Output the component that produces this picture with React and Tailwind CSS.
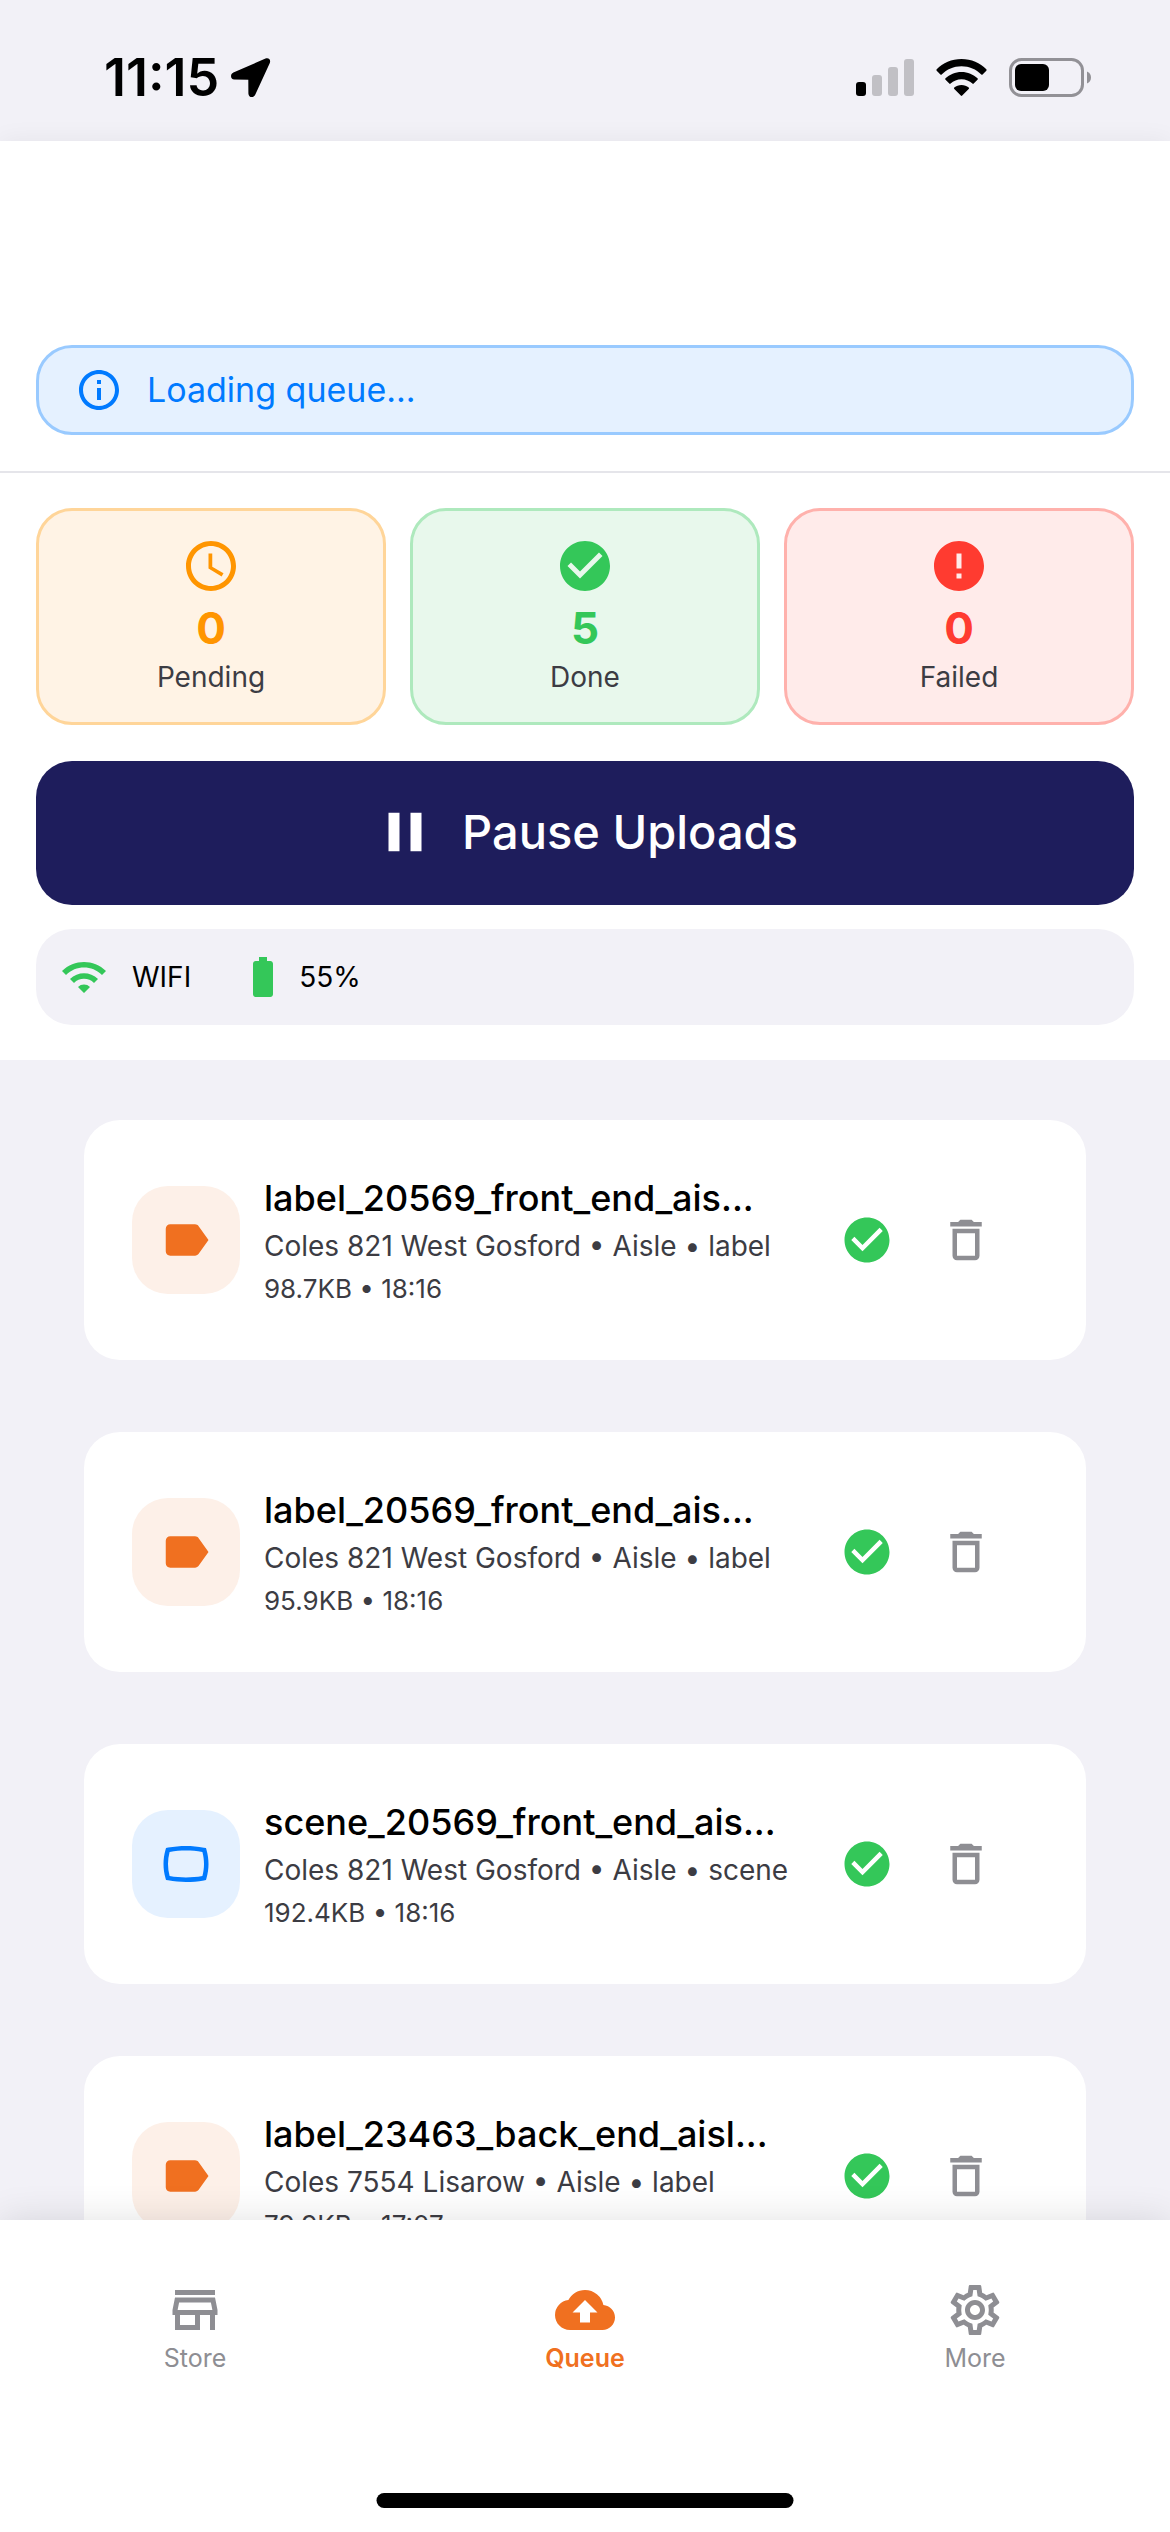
import {
  MdInfoOutline,
  MdAccessTime,
  MdCheckCircle,
  MdError,
  MdPause,
  MdWifi,
  MdBatteryFull,
  MdLabel,
  MdOutlinePanoramaWideAngle,
  MdDeleteOutline,
  MdOutlineStore,
  MdBackup,
  MdOutlineSettings,
} from 'react-icons/md';

const STATS = [
  { label: 'Pending', value: 0, icon: MdAccessTime, color: 'text-[#ff9500]', box: 'bg-[#fff3e5] border-[#ffd599]' },
  { label: 'Done', value: 5, icon: MdCheckCircle, color: 'text-[#34c759]', box: 'bg-[#e8f8ec] border-[#aee9bd]' },
  { label: 'Failed', value: 0, icon: MdError, color: 'text-[#ff3b30]', box: 'bg-[#ffebea] border-[#ffb1ac]' },
];

const UPLOADS = [
  { id: 1, name: 'label_20569_front_end_ais...', store: 'Coles 821 West Gosford', type: 'label', size: '98.7KB', time: '18:16' },
  { id: 2, name: 'label_20569_front_end_ais...', store: 'Coles 821 West Gosford', type: 'label', size: '95.9KB', time: '18:16' },
  { id: 3, name: 'scene_20569_front_end_ais...', store: 'Coles 821 West Gosford', type: 'scene', size: '192.4KB', time: '18:16' },
  { id: 4, name: 'label_23463_back_end_aisl...', store: 'Coles 7554 Lisarow', type: 'label', size: '79.9KB', time: '17:07' },
];

const TYPES = {
  label: { icon: MdLabel, style: 'bg-[#fdf0e8] text-[#f07020]' },
  scene: { icon: MdOutlinePanoramaWideAngle, style: 'bg-[#e5f1ff] text-[#007aff]' },
};

const TABS = [
  { label: 'Store', icon: MdOutlineStore },
  { label: 'Queue', icon: MdBackup, active: true },
  { label: 'More', icon: MdOutlineSettings },
];

function StatusBar() {
  return (
    <div className="flex h-[141px] shrink-0 items-center justify-between bg-[#f2f1f7] pl-[104px] pr-[78px] pt-[14px]">
      <div className="flex items-center gap-3">
        <span className="text-[52px] font-semibold leading-[60px]">11:15</span>
        <svg width="40" height="40" viewBox="0 0 40 40" aria-hidden="true">
          <path d="M34.500.6 2.400 14.500C-1.200 16.200-.5 21.500 3.200 21.600L17.300 21.800 17.400 35.500C17.500 39.800 22.600 40.300 24.200 36.800L38.700 5.200C40.200 1.900 37.600-.7 34.500.6Z" />
        </svg>
      </div>
      <div className="flex items-center">
        <svg width="58" height="38" viewBox="0 0 58 38" aria-hidden="true">
          <rect x="0" y="23" width="10" height="14" rx="3" />
          <rect x="16" y="16" width="10" height="21" rx="3" fill="#c1c0c5" />
          <rect x="32" y="8" width="10" height="29" rx="3" fill="#c1c0c5" />
          <rect x="48" y="0" width="10" height="37" rx="3" fill="#c1c0c5" />
        </svg>
        <svg className="ml-[22px]" width="51" height="38" viewBox="0 0 51 38" aria-hidden="true">
          <path d="M25.500 0C35.300 0 44.200 3.900 50.300 10.200 50.800 10.700 50.800 11.200 50.300 11.700L46.600 15.400C46.200 15.800 45.700 15.800 45.300 15.400 40.200 10.300 33.200 7.200 25.500 7.200S10.800 10.300 5.700 15.400C5.300 15.800 4.800 15.800 4.400 15.400L.7 11.700C.2 11.200.2 10.700.7 10.200 6.800 3.900 15.700 0 25.500 0Z" />
          <path d="M25.500 13C31.800 13 37.400 15.500 41.500 19.300 42 19.800 42 20.300 41.500 20.800L37.700 24.600C37.300 25 36.800 25 36.400 24.600 33.500 22 29.700 20.300 25.500 20.300S17.500 22 14.600 24.600C14.200 25 13.700 25 13.300 24.600L9.500 20.800C9 20.300 9 19.800 9.500 19.300 13.600 15.500 19.200 13 25.500 13Z" />
          <path d="M25.500 26C28.300 26 30.800 27 32.700 28.600 33.200 29 33.200 29.600 32.700 30.100L26.200 36.600C25.800 37 25.200 37 24.800 36.600L18.300 30.100C17.800 29.600 17.800 29 18.300 28.600 20.200 27 22.700 26 25.500 26Z" />
        </svg>
        <svg className="ml-[22px]" width="83" height="39" viewBox="0 0 83 39" aria-hidden="true">
          <rect x="1.500" y="1.500" width="72" height="36" rx="11" fill="none" stroke="#929196" strokeWidth="3" />
          <rect x="6" y="6" width="34" height="27" rx="6" />
          <path d="M78 13.500C80.500 14.500 82 16.800 82 19.500S80.500 24.500 78 25.500Z" fill="#929196" />
        </svg>
      </div>
    </div>
  );
}

function StatCard({ stat }) {
  const Icon = stat.icon;
  return (
    <div className={`flex flex-col items-center rounded-[36px] border-[3px] pt-[25px] pb-6 ${stat.box}`}>
      <Icon size={60} className={stat.color} />
      <p className={`mt-1 text-[44px] font-bold leading-[56px] ${stat.color}`}>{stat.value}</p>
      <p className="text-[28px] leading-[42px] text-[#3c3c43]">{stat.label}</p>
    </div>
  );
}

function UploadCard({ upload }) {
  const type = TYPES[upload.type];
  const Icon = type.icon;
  return (
    <li className="flex h-60 items-center rounded-[36px] bg-white pl-12 pr-[93px]">
      <div className={`flex size-[108px] shrink-0 items-center justify-center rounded-[36px] ${type.style}`}>
        <Icon size={54} />
      </div>
      <div className="ml-6 min-w-0 flex-1 whitespace-nowrap pt-[2px]">
        <h2 className="text-[36px] font-medium leading-[48px]">{upload.name}</h2>
        <p className="text-[28px] leading-[48px] text-[#3c3c43]">
          {upload.store} • Aisle • {upload.type}
        </p>
        <p className="text-[26px] leading-[38px] text-[#3c3c43]">
          {upload.size} • {upload.time}
        </p>
      </div>
      <MdCheckCircle size={54} className="shrink-0 text-[#34c759]" />
      <button type="button" aria-label={`Delete ${upload.name}`} className="ml-[45px] shrink-0 text-[#8e8e93]">
        <MdDeleteOutline size={54} />
      </button>
    </li>
  );
}

export default function App() {
  return (
    <div className="flex h-screen flex-col overflow-hidden bg-[#f2f1f7] font-[Inter,sans-serif] text-black">
      <StatusBar />

      <header className="h-[132px] shrink-0 bg-white shadow-[0_0_24px_rgba(0,0,0,0.06)]" />

      <section className="relative shrink-0 bg-white pt-[72px]">
        <div className="px-9">
          <div className="flex h-[90px] items-center gap-6 rounded-[36px] border-[3px] border-[#99caff] bg-[#e5f1ff] px-10 text-[#007aff]">
            <MdInfoOutline size={48} className="-ml-1" />
            <p className="text-[34px] leading-[48px]">Loading queue...</p>
          </div>
        </div>
        <div className="mt-9 border-t-2 border-[#e5e5ea] px-9 py-[35px]">
          <div className="grid grid-cols-3 gap-6">
            {STATS.map(stat => (
              <StatCard key={stat.label} stat={stat} />
            ))}
          </div>
          <button
            type="button"
            className="mt-9 flex h-36 w-full items-center justify-center gap-6 rounded-[36px] bg-[#1e1d5c] pb-[2px] text-[47px] font-medium text-white"
          >
            <MdPause size={66} />
            Pause Uploads
          </button>
          <div className="mt-6 flex h-24 items-center rounded-[36px] bg-[#f2f1f7] px-6 text-[28px]">
            <MdWifi size={48} className="mr-6 text-[#34c759]" />
            WIFI
            <MdBatteryFull size={48} className="ml-12 mr-3 text-[#34c759]" />
            55%
          </div>
        </div>
      </section>

      <main className="min-h-0 flex-1 overflow-hidden px-[84px] pt-[60px]">
        <ul className="flex flex-col gap-[72px]">
          {UPLOADS.map(upload => (
            <UploadCard key={upload.id} upload={upload} />
          ))}
        </ul>
      </main>

      <nav className="relative h-[312px] shrink-0 bg-white shadow-[0_0_36px_rgba(0,0,0,0.12)]">
        <div className="grid grid-cols-3 pt-[60px]">
          {TABS.map(({ label, icon: Icon, active }) => (
            <a
              key={label}
              href={`#${label.toLowerCase()}`}
              className={`flex flex-col items-center text-[25px] leading-9 ${active ? 'font-semibold text-[#f07020]' : 'text-[#8e8e93]'}`}
            >
              <Icon size={60} />
              {label}
            </a>
          ))}
        </div>
        <div className="absolute bottom-6 left-1/2 h-[15px] w-[417px] -translate-x-1/2 rounded-full bg-black" />
      </nav>
    </div>
  );
}
